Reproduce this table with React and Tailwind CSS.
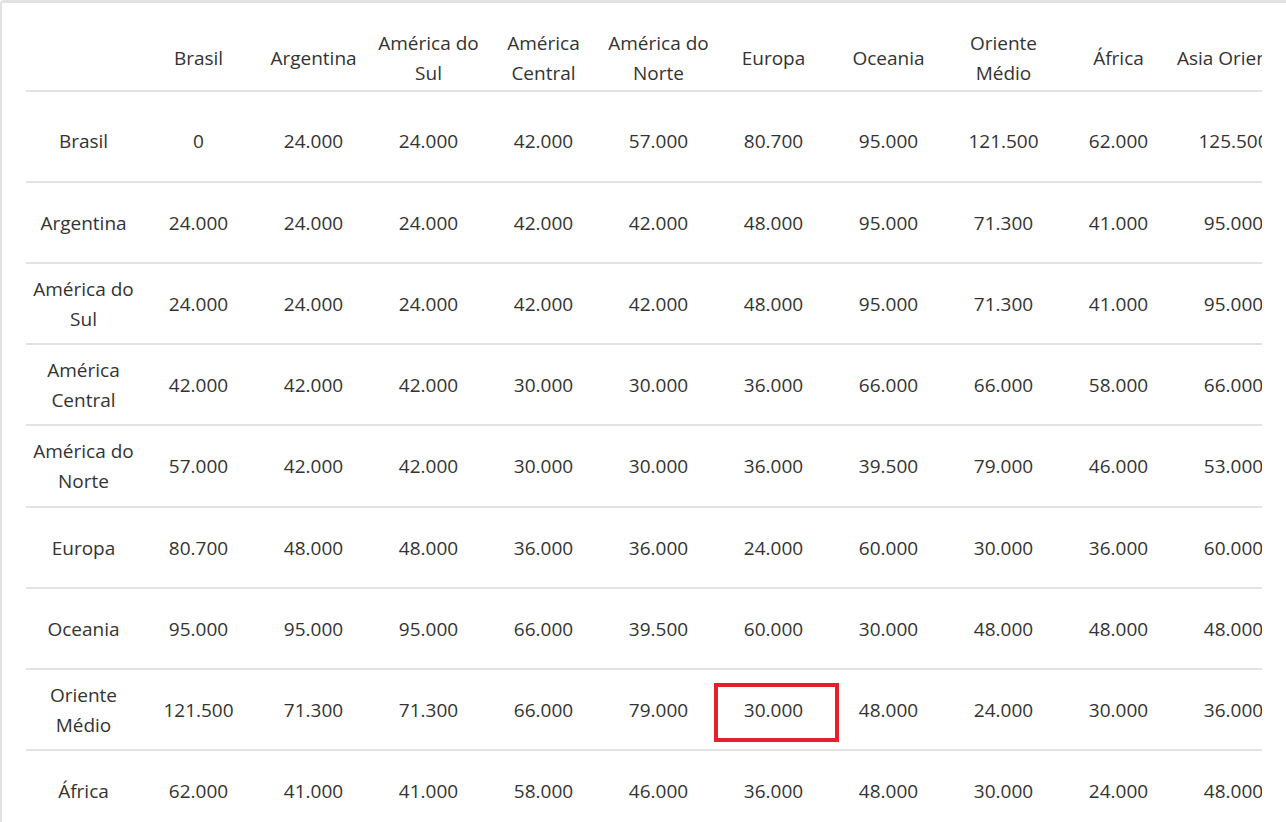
import React from 'react';

const cols = [
  'Brasil',
  'Argentina',
  'América do Sul',
  'América Central',
  'América do Norte',
  'Europa',
  'Oceania',
  'Oriente Médio',
  'África',
  'Asia Oriental',
];

const rows = [
  ['Brasil', '0', '24.000', '24.000', '42.000', '57.000', '80.700', '95.000', '121.500', '62.000', '125.500'],
  ['Argentina', '24.000', '24.000', '24.000', '42.000', '42.000', '48.000', '95.000', '71.300', '41.000', '95.000'],
  ['América do Sul', '24.000', '24.000', '24.000', '42.000', '42.000', '48.000', '95.000', '71.300', '41.000', '95.000'],
  ['América Central', '42.000', '42.000', '42.000', '30.000', '30.000', '36.000', '66.000', '66.000', '58.000', '66.000'],
  ['América do Norte', '57.000', '42.000', '42.000', '30.000', '30.000', '36.000', '39.500', '79.000', '46.000', '53.000'],
  ['Europa', '80.700', '48.000', '48.000', '36.000', '36.000', '24.000', '60.000', '30.000', '36.000', '60.000'],
  ['Oceania', '95.000', '95.000', '95.000', '66.000', '39.500', '60.000', '30.000', '48.000', '48.000', '48.000'],
  ['Oriente Médio', '121.500', '71.300', '71.300', '66.000', '79.000', '30.000', '48.000', '24.000', '30.000', '36.000'],
  ['África', '62.000', '41.000', '41.000', '58.000', '46.000', '36.000', '48.000', '30.000', '24.000', '48.000'],
];

function Cell({ children, last }) {
  return (
    <div
      className={
        'flex w-[115px] shrink-0 justify-center px-1 text-center ' +
        (last ? 'whitespace-nowrap' : '')
      }
    >
      {children}
    </div>
  );
}

export default function App() {
  return (
    <div
      className="relative h-[822px] w-[1286px] overflow-hidden bg-white text-[19px] leading-[30px] text-[#333]"
      style={{ fontFamily: '"Open Sans", "Noto Sans", sans-serif' }}
    >
      <div className="h-full rounded-tl-[4px] border-l-2 border-t-[3px] border-[#e2e2e2] pl-6">
        <div className="w-[1236px] overflow-hidden">
          <div className="w-max">
            <div className="flex h-[89px] items-center border-b-2 border-[#e3e3e3] pt-[23px]">
              <Cell />
              {cols.map((c, i) => (
                <Cell key={c} last={i === cols.length - 1}>
                  {c}
                </Cell>
              ))}
            </div>
            {rows.map((r, ri) => (
              <div
                key={r[0]}
                className={
                  'flex items-center border-b-2 border-[#e3e3e3] ' +
                  (ri === 0 ? 'h-[91px] pt-[9px]' : ri === 4 ? 'h-[82px]' : 'h-[81px]')
                }
              >
                {r.map((v, i) => (
                  <Cell key={i} last={i === r.length - 1}>
                    {v}
                  </Cell>
                ))}
              </div>
            ))}
          </div>
        </div>
      </div>
      <div className="absolute left-[714px] top-[683px] h-[59px] w-[125px] border-4 border-[#e3202b]" />
    </div>
  );
}
